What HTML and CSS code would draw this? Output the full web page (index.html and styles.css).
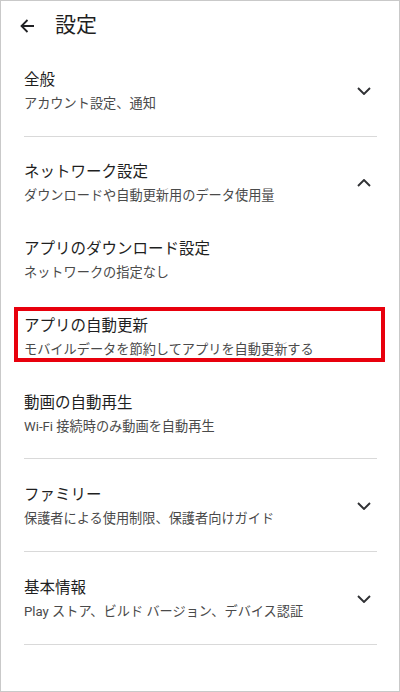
FILE: index.html
```html
<!DOCTYPE html>
<html lang="ja">
<head>
<meta charset="utf-8">
<title>設定</title>
<link rel="stylesheet" href="styles.css">
</head>
<body>
<div class="screen">
  <header class="appbar">
    <svg class="back" width="14" height="14" viewBox="0 0 14 14" aria-hidden="true">
      <path d="M14 7H1.5M7.5 1L1.5 7l6 6" fill="none" stroke="#202124" stroke-width="1.8"/>
    </svg>
    <h1 class="appbar-title">設定</h1>
  </header>

  <section class="group">
    <div class="row tall">
      <div class="text">
        <div class="title">全般</div>
        <div class="sub">アカウント設定、通知</div>
      </div>
      <svg class="chev" width="14" height="8" viewBox="0 0 14 8" aria-hidden="true"><path d="M1 1l6 6 6-6" fill="none" stroke="#303134" stroke-width="1.9"/></svg>
    </div>
  </section>
  <div class="divider"></div>

  <section class="group">
    <div class="row">
      <div class="text">
        <div class="title">ネットワーク設定</div>
        <div class="sub">ダウンロードや自動更新用のデータ使用量</div>
      </div>
      <svg class="chev" width="14" height="8" viewBox="0 0 14 8" aria-hidden="true"><path d="M1 7l6-6 6 6" fill="none" stroke="#303134" stroke-width="1.9"/></svg>
    </div>
    <div class="row">
      <div class="text">
        <div class="title">アプリのダウンロード設定</div>
        <div class="sub">ネットワークの指定なし</div>
      </div>
    </div>
    <div class="row">
      <div class="text marked">
        <div class="title">アプリの自動更新</div>
        <div class="sub">モバイルデータを節約してアプリを自動更新する</div>
        <div class="highlight"></div>
      </div>
    </div>
    <div class="row">
      <div class="text">
        <div class="title">動画の自動再生</div>
        <div class="sub">Wi-Fi 接続時のみ動画を自動再生</div>
      </div>
    </div>
  </section>
  <div class="divider"></div>

  <section class="group">
    <div class="row tall">
      <div class="text">
        <div class="title">ファミリー</div>
        <div class="sub">保護者による使用制限、保護者向けガイド</div>
      </div>
      <svg class="chev" width="14" height="8" viewBox="0 0 14 8" aria-hidden="true"><path d="M1 1l6 6 6-6" fill="none" stroke="#303134" stroke-width="1.9"/></svg>
    </div>
  </section>
  <div class="divider"></div>

  <section class="group">
    <div class="row tall">
      <div class="text">
        <div class="title">基本情報</div>
        <div class="sub">Play ストア、ビルド バージョン、デバイス認証</div>
      </div>
      <svg class="chev" width="14" height="8" viewBox="0 0 14 8" aria-hidden="true"><path d="M1 1l6 6 6-6" fill="none" stroke="#303134" stroke-width="1.9"/></svg>
    </div>
  </section>
  <div class="divider"></div>
</div>
</body>
</html>
```

FILE: styles.css
```css
* { box-sizing: border-box; }

html, body {
  margin: 0;
  padding: 0;
  background: #ffffff;
}

.screen {
  width: 400px;
  height: 692px;
  border: 1px solid #c9c9c9;
  background: #ffffff;
  font-family: Roboto, "Noto Sans CJK JP", sans-serif;
  color: #1f1f1f;
  overflow: hidden;
}

.appbar {
  height: 43px;
  padding-top: 4px;
  padding-left: 19px;
  display: flex;
  align-items: center;
}

.back {
  display: block;
  flex: none;
  margin-top: 2px;
}

.appbar-title {
  margin: 0 0 0 21px;
  font-size: 21px;
  font-weight: 400;
  line-height: 28px;
  color: #1f1f1f;
}

.group {
  padding: 7px 0 6px;
}

.row {
  display: flex;
  align-items: center;
  padding: 16px 0 15px 23px;
  margin-right: 22px;
}

.row.tall {
  padding-top: 17px;
  padding-bottom: 16px;
}

.text {
  flex: 1;
  min-width: 0;
}

.marked {
  position: relative;
}

.title {
  font-size: 15.5px;
  line-height: 24px;
  color: #1f1f1f;
}

.sub {
  margin-top: 2px;
  font-size: 13.2px;
  line-height: 20px;
  color: #4a4a4a;
}

.chev {
  display: block;
  flex: none;
  margin-right: 6px;
}

.divider {
  height: 1px;
  margin: 0 22px 0 23px;
  background: #d9d9d9;
}

.highlight {
  position: absolute;
  left: -10px;
  top: -7px;
  width: 371px;
  height: 55px;
  border: 4.5px solid #e8000d;
  pointer-events: none;
}
```
